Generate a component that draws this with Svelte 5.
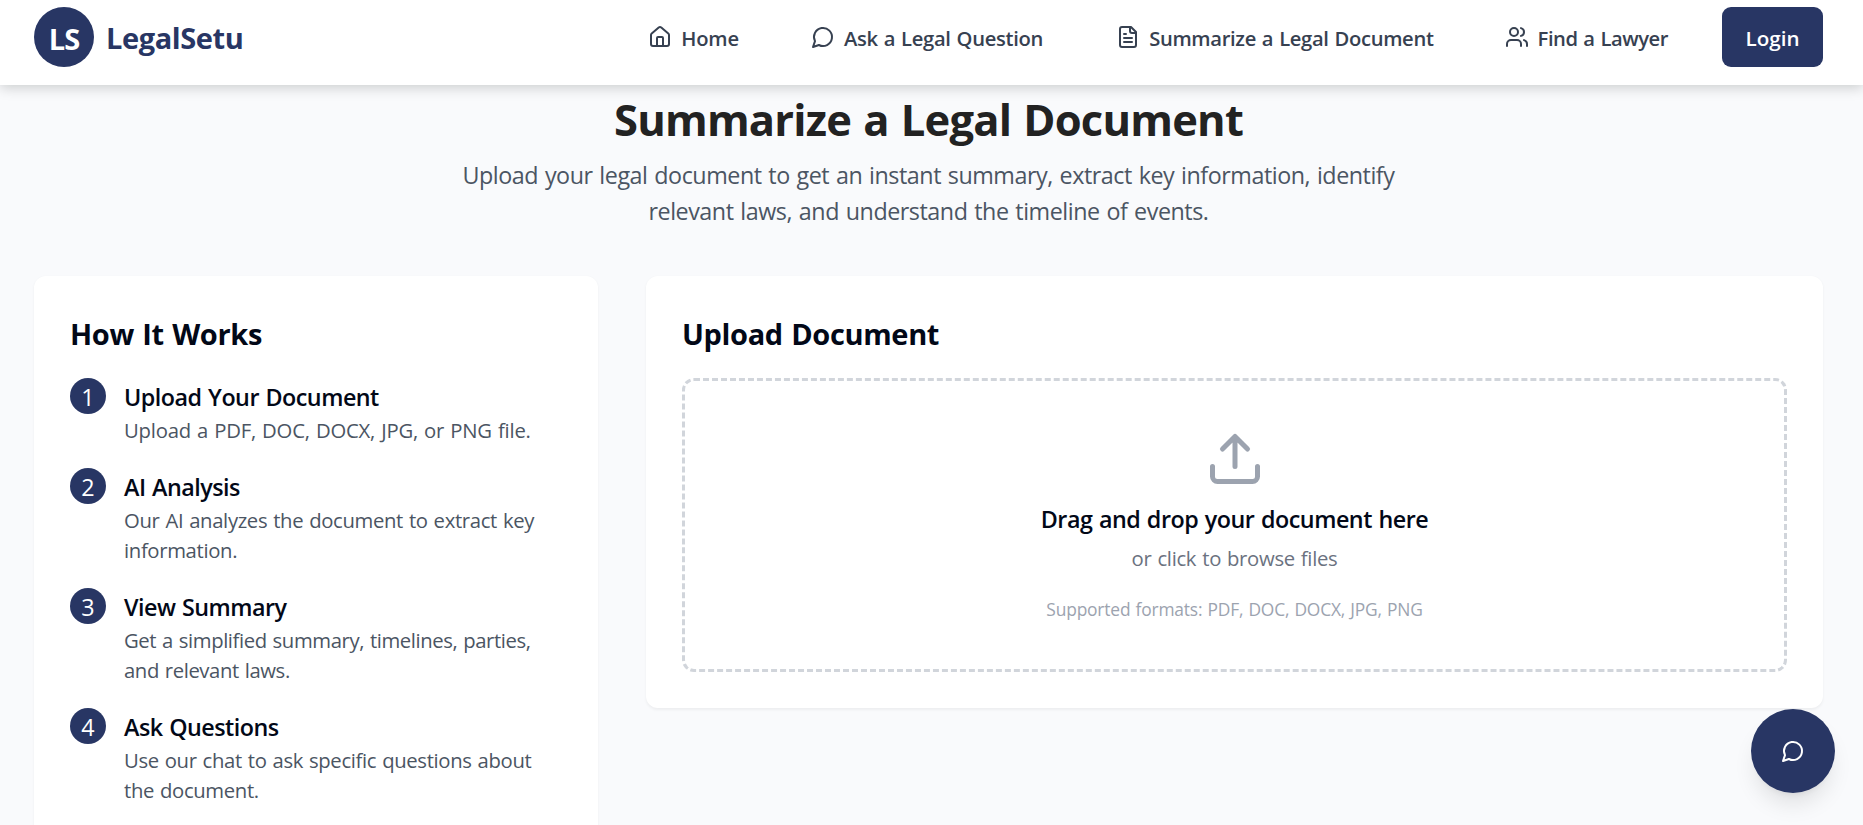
<script>
  const nav = [
    { label: 'Home', icon: 'home', ls: -0.2, after: 72 },
    { label: 'Ask a Legal Question', icon: 'chat', ls: -0.3, after: 73 },
    { label: 'Summarize a Legal Document', icon: 'file', ls: -0.33, after: 71 },
    { label: 'Find a Lawyer', icon: 'users', ls: -0.45, after: 54 },
  ];

  const steps = [
    { title: 'Upload Your Document', text: 'Upload a PDF, DOC, DOCX, JPG, or PNG file.', ls: -0.2 },
    { title: 'AI Analysis', text: 'Our AI analyzes the document to extract key information.', ls: -0.34 },
    { title: 'View Summary', text: 'Get a simplified summary, timelines, parties, and relevant laws.', ls: -0.4 },
    { title: 'Ask Questions', text: 'Use our chat to ask specific questions about the document.', ls: -0.34 },
  ];
</script>

{#snippet icon(name)}
  <svg class="icon" viewBox="0 0 24 24" fill="none" stroke="currentColor" stroke-width="2" stroke-linecap="round" stroke-linejoin="round" aria-hidden="true">
    {#if name === 'home'}
      <path d="M15 21v-8a1 1 0 0 0-1-1h-4a1 1 0 0 0-1 1v8" />
      <path d="M3 10a2 2 0 0 1 .709-1.528l7-5.999a2 2 0 0 1 2.582 0l7 5.999A2 2 0 0 1 21 10v9a2 2 0 0 1-2 2H5a2 2 0 0 1-2-2z" />
    {:else if name === 'chat'}
      <path d="M7.9 20A9 9 0 1 0 4 16.1L2 22Z" />
    {:else if name === 'file'}
      <path d="M15 2H6a2 2 0 0 0-2 2v16a2 2 0 0 0 2 2h12a2 2 0 0 0 2-2V7Z" />
      <path d="M14 2v4a2 2 0 0 0 2 2h4M10 9H8M16 13H8M16 17H8" />
    {:else if name === 'users'}
      <path d="M16 21v-2a4 4 0 0 0-4-4H6a4 4 0 0 0-4 4v2" />
      <circle cx="9" cy="7" r="4" />
      <path d="M22 21v-2a4 4 0 0 0-3-3.87M16 3.13a4 4 0 0 1 0 7.75" />
    {:else}
      <path d="M21 15v4a2 2 0 0 1-2 2H5a2 2 0 0 1-2-2v-4" />
      <path d="M17 8l-5-5-5 5M12 3v12" />
    {/if}
  </svg>
{/snippet}

<div class="page">
  <header>
    <div class="brand">
      <span class="logo">LS</span>
      <span class="name">LegalSetu</span>
    </div>
    <nav>
      {#each nav as item}
        <a href="#{item.icon}" style="margin-right: {item.after}px">
          {@render icon(item.icon)}
          <span style="letter-spacing: {item.ls}px">{item.label}</span>
        </a>
      {/each}
      <button class="login">Login</button>
    </nav>
  </header>

  <main>
    <section class="intro">
      <h1>Summarize a Legal Document</h1>
      <p>Upload your legal document to get an instant summary, extract key information, identify relevant laws, and understand the timeline of events.</p>
    </section>

    <div class="columns">
      <section class="card how">
        <h2>How It Works</h2>
        {#each steps as step, i}
          <div class="step">
            <span class="num">{i + 1}</span>
            <div class="body">
              <h3>{step.title}</h3>
              <p style="letter-spacing: {step.ls}px">{step.text}</p>
            </div>
          </div>
        {/each}
      </section>

      <section class="card">
        <h2>Upload Document</h2>
        <div class="drop">
          {@render icon('upload')}
          <p class="lead">Drag and drop your document here</p>
          <p class="browse">or click to browse files</p>
          <p class="formats">Supported formats: PDF, DOC, DOCX, JPG, PNG</p>
        </div>
      </section>
    </div>
  </main>

  <button class="fab" aria-label="Chat">{@render icon('chat')}</button>
</div>

<style>
  :global(body) {
    margin: 0;
    background: #f9fafc;
  }
  .page {
    height: 825px;
    overflow: hidden;
    font-family: 'Open Sans', 'Noto Sans', sans-serif;
    color: #020817;
  }
  h1, h2, h3, p { margin: 0; }
  button { border: 0; font-family: inherit; }
  .icon { width: 24px; height: 24px; flex: none; display: block; }

  header {
    position: relative;
    box-sizing: border-box;
    height: 85px;
    padding: 7px 40px 18px 34px;
    display: flex;
    align-items: center;
    justify-content: space-between;
    background: #fff;
    box-shadow: 0 3px 12px rgba(0, 10, 0, 0.18);
  }
  .brand { display: flex; align-items: center; gap: 12px; }
  .logo {
    width: 60px;
    height: 60px;
    border-radius: 50%;
    background: #283664;
    color: #fff;
    display: flex;
    align-items: center;
    justify-content: center;
    box-sizing: border-box;
    padding-top: 2px;
    font-size: 29px;
    font-weight: 700;
    letter-spacing: -0.9px;
  }
  .name {
    padding-top: 2px;
    font-size: 29px;
    line-height: 42px;
    font-weight: 700;
    letter-spacing: -0.4px;
    color: #283664;
  }
  nav { display: flex; align-items: center; }
  nav a {
    display: flex;
    align-items: center;
    gap: 9px;
    color: #374151;
    text-decoration: none;
    font-size: 20.2px;
    line-height: 30px;
    font-weight: 600;
    word-spacing: 1px;
  }
  nav a span { padding-top: 2px; }
  .login {
    width: 101px;
    height: 60px;
    border-radius: 9px;
    background: #283664;
    color: #fff;
    font-size: 20.6px;
    font-weight: 600;
    padding: 2px 0 0;
  }

  main { padding: 8px 40px 0 34px; }
  .intro { text-align: center; }
  .intro h1 {
    font-size: 43.5px;
    line-height: 54px;
    font-weight: 700;
    letter-spacing: -0.78px;
    word-spacing: 1.5px;
    color: #222;
  }
  .intro p {
    width: 1008px;
    margin: 10px auto 47px;
    font-size: 23.3px;
    line-height: 36px;
    letter-spacing: -0.46px;
    word-spacing: 1.2px;
    color: #4b5563;
  }

  .columns {
    display: grid;
    grid-template-columns: 564px 1177px;
    gap: 48px;
    align-items: start;
  }
  .card {
    background: #fff;
    border-radius: 12px;
    padding: 36px;
    box-shadow: 0 1.5px 3px rgba(0, 0, 0, 0.05);
  }
  .card h2 {
    padding-top: 1px;
    margin-bottom: 23px;
    font-size: 29px;
    line-height: 42px;
    font-weight: 700;
    letter-spacing: -0.35px;
    word-spacing: 1.2px;
  }
  .step { display: flex; gap: 18px; margin-bottom: 23px; }
  .num {
    width: 36px;
    height: 36px;
    flex: none;
    border-radius: 50%;
    background: #283664;
    color: #fff;
    text-align: center;
    font-size: 23.3px;
    line-height: 38px;
  }
  .body { padding-top: 1px; }
  .step h3 {
    font-size: 23.3px;
    line-height: 36px;
    font-weight: 600;
    letter-spacing: -0.5px;
    word-spacing: 1px;
  }
  .step p {
    font-size: 20.3px;
    line-height: 30px;
    word-spacing: 1px;
    color: #4b5563;
  }

  .drop {
    display: flex;
    flex-direction: column;
    align-items: center;
    border: 3px dashed #d1d5db;
    border-radius: 12px;
    padding: 48px 0;
  }
  .drop .icon { width: 60px; height: 60px; color: #9ca3af; }
  .lead {
    margin-top: 12px;
    font-size: 23.3px;
    line-height: 36px;
    font-weight: 600;
    letter-spacing: -0.48px;
    word-spacing: 1px;
  }
  .browse {
    margin-top: 6px;
    font-size: 20.3px;
    line-height: 30px;
    letter-spacing: -0.3px;
    word-spacing: 1px;
    color: #6b7280;
  }
  .formats {
    margin-top: 24px;
    font-size: 17.4px;
    line-height: 24px;
    letter-spacing: -0.18px;
    word-spacing: 0.8px;
    color: #9ca3af;
  }

  .fab {
    position: fixed;
    right: 28px;
    bottom: 32px;
    width: 84px;
    height: 84px;
    padding: 0;
    border-radius: 50%;
    display: flex;
    align-items: center;
    justify-content: center;
    background: #283664;
    color: #fff;
    box-shadow: 0 15px 22px -4px rgba(0, 0, 0, 0.1), 0 6px 9px -6px rgba(0, 0, 0, 0.1);
  }
</style>
